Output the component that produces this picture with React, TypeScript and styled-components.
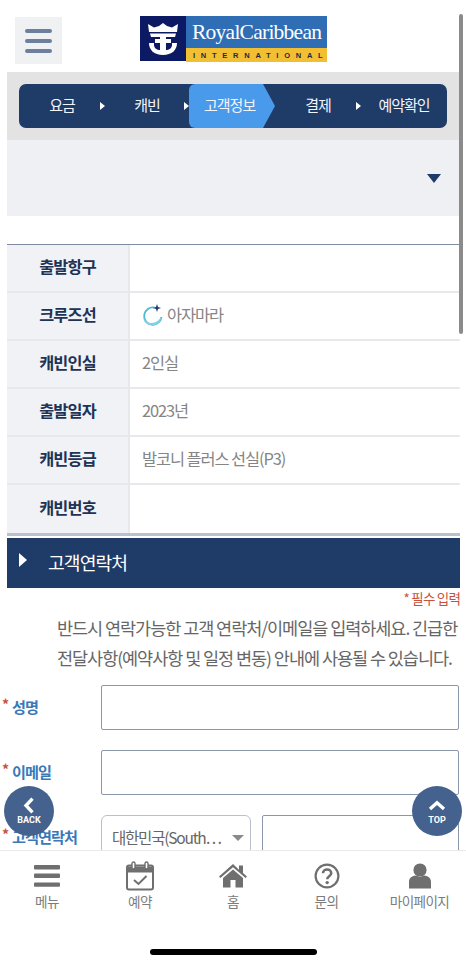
import React from 'react';
import styled, { createGlobalStyle } from 'styled-components';

const KR = `"Noto Sans CJK KR", "Noto Sans", sans-serif`;

const GlobalStyle = createGlobalStyle`
  html, body {
    margin: 0;
    padding: 0;
    background: #fff;
    font-family: ${KR};
  }
  * { box-sizing: border-box; }
`;

const Screen = styled.div`
  position: relative;
  width: 466px;
  height: 964px;
  overflow: hidden;
  background: #fff;
`;

const Content = styled.div`
  display: flex;
  flex-direction: column;
  padding: 0 6px 0 7px;
`;

const Header = styled.header`
  display: flex;
  align-items: flex-start;
  height: 72px;
  padding: 16px 0 0 8px;
`;

const MenuButton = styled.div`
  display: flex;
  flex-direction: column;
  justify-content: center;
  gap: 6px;
  width: 47px;
  height: 47px;
  margin-top: 1px;
  padding: 0 10px;
  background: #f0f1f3;
`;

const MenuLine = styled.span`
  height: 4px;
  border-radius: 2px;
  background: #6d7f9f;
`;

const Logo = styled.div`
  display: flex;
  width: 187px;
  height: 45px;
  margin-left: 78px;
`;

const LogoMark = styled.div`
  display: flex;
  flex: none;
  align-items: center;
  justify-content: center;
  width: 46px;
  background: #0b1a62;
`;

const LogoRight = styled.div`
  display: flex;
  flex: 1;
  min-width: 0;
  flex-direction: column;
`;

const LogoName = styled.div`
  flex: 1;
  padding-left: 6px;
  background: #2f6db5;
  color: #fff;
  font-family: "Liberation Serif", serif;
  font-size: 21.5px;
  line-height: 32px;
  letter-spacing: -0.75px;
  white-space: nowrap;
`;

const LogoSub = styled.div`
  flex: none;
  height: 14px;
  padding-left: 7px;
  background: #f2bf33;
  color: #1b2a4a;
  font-family: "Liberation Sans", sans-serif;
  font-size: 7.5px;
  font-weight: 700;
  line-height: 15px;
  letter-spacing: 5.75px;
  white-space: nowrap;
  overflow: hidden;
`;

const StepWrap = styled.div`
  height: 68px;
  padding: 12px 13px 12px 12px;
  background: #e3e3e3;
`;

const StepBar = styled.nav`
  display: flex;
  align-items: center;
  height: 44px;
  border-radius: 7px;
  background: #1f3b68;
  color: #f2f4f8;
  font-size: 15px;
  letter-spacing: -1px;
`;

const Step = styled.div<{ $width: number }>`
  display: flex;
  align-items: center;
  justify-content: center;
  flex: none;
  width: ${({ $width }) => $width}px;
  height: 44px;
  padding-bottom: 3px;
  white-space: nowrap;
`;

const StepArrow = styled.span`
  flex: none;
  width: 0;
  display: flex;
  justify-content: center;
  transform: translateX(-3px);
  &::before {
    content: '';
    flex: none;
    border-left: 5px solid #fff;
    border-top: 4px solid transparent;
    border-bottom: 4px solid transparent;
  }
`;

const ActiveStep = styled.div`
  display: flex;
  align-items: center;
  flex: none;
  width: 86px;
  height: 44px;
  padding: 0 0 3px 15px;
  background: #4a9aec;
  clip-path: polygon(0 0, 74px 0, 86px 22px, 74px 44px, 0 44px);
  border-radius: 6px 0 0 6px;
  white-space: nowrap;
`;

const SelectPanel = styled.div`
  display: flex;
  align-items: center;
  justify-content: flex-end;
  height: 76px;
  padding: 0 19px 0 0;
  background: #eef0f4;
`;

const Caret = styled.span`
  margin-top: 1px;
  border-top: 9px solid #1f3b68;
  border-left: 7.5px solid transparent;
  border-right: 7.5px solid transparent;
`;

const InfoTable = styled.div`
  margin-top: 28px;
  border-top: 1.5px solid #7d8ba3;
  border-bottom: 3px solid #b9c1cd;
`;

const InfoRow = styled.div`
  display: grid;
  grid-template-columns: 123px 1fr;
  height: 48px;
  border-bottom: 2px solid #e8e9eb;
  &:last-child { border-bottom: 0; height: 47.5px; }
`;

const InfoHead = styled.div`
  display: flex;
  align-items: center;
  justify-content: center;
  padding: 0 0 4px 0;
  background: #f0f2f6;
  border-right: 2px solid #e6e8ec;
  color: #1f3355;
  font-size: 16.3px;
  font-weight: 700;
  letter-spacing: -0.8px;
`;

const InfoValue = styled.div`
  display: flex;
  align-items: center;
  gap: 4px;
  padding: 0 0 4px 12px;
  color: #858585;
  font-size: 16.4px;
  letter-spacing: -1.1px;
  & > svg { margin-top: 3px; }
`;

const SectionTitle = styled.h2`
  display: flex;
  align-items: center;
  height: 50px;
  margin: 2px 0 0;
  padding: 0 0 2px 12px;
  background: #1f3b68;
  color: #fff;
  font-size: 18.2px;
  font-weight: 400;
  letter-spacing: -0.9px;
  &::before {
    content: '';
    margin: -3px 21px 0 0;
    border-left: 8px solid #fff;
    border-top: 7px solid transparent;
    border-bottom: 7px solid transparent;
  }
`;

const Required = styled.div`
  margin-top: 0;
  color: #c8503c;
  font-size: 13.5px;
  line-height: 20px;
  letter-spacing: -0.8px;
  text-align: right;
`;

const Notice = styled.p`
  margin: 5px 0 0;
  padding-left: 50px;
  color: #666;
  font-size: 17.5px;
  line-height: 30px;
  letter-spacing: -1.05px;
  white-space: nowrap;
`;

const FormRow = styled.div<{ $height: number; $gap: number }>`
  display: grid;
  grid-template-columns: 94px 1fr;
  height: ${({ $height }) => $height}px;
  margin: ${({ $gap }) => $gap}px 0 0 -7px;
  width: 459px;
`;

const FormLabel = styled.label`
  display: flex;
  align-items: center;
  padding: 0 0 2px 2px;
  color: #3b78b8;
  font-size: 15.2px;
  font-weight: 700;
  letter-spacing: -1px;
  white-space: nowrap;
  &::before {
    content: '*';
    margin: 0 4px 4px 0;
    color: #c8503c;
    font-size: 14px;
  }
`;

const TextBox = styled.div`
  margin-left: 7px;
  height: 100%;
  border: 1.5px solid #8a97ab;
  border-radius: 2px;
  background: #fff;
`;

const PhoneFields = styled.div`
  display: flex;
  gap: 11px;
  margin-left: 7px;
`;

const CountrySelect = styled.div`
  display: flex;
  align-items: center;
  flex: none;
  width: 150px;
  height: 44px;
  padding: 0 6px 0 10px;
  border: 1.5px solid #b9c0cb;
  border-radius: 6px;
  color: #666;
  font-size: 15.5px;
  letter-spacing: -1.2px;
  white-space: nowrap;
  &::after {
    content: '';
    margin-left: auto;
    margin-top: 3px;
    border-top: 6px solid #8a8a8a;
    border-left: 6px solid transparent;
    border-right: 6px solid transparent;
  }
`;

const PhoneBox = styled.div`
  flex: 1;
  height: 44px;
  border: 1.5px solid #8a97ab;
  border-radius: 2px;
`;

const ScrollThumb = styled.div`
  position: absolute;
  top: 14px;
  left: 459px;
  width: 4px;
  height: 320px;
  border-radius: 2px;
  background: #8b8b8b;
`;

const FloatButton = styled.div<{ $side: 'left' | 'right' }>`
  position: absolute;
  top: 786px;
  ${({ $side }) => ($side === 'left' ? 'left: 4px;' : 'right: 4px;')}
  display: flex;
  flex-direction: column;
  align-items: center;
  width: 50px;
  height: 50px;
  padding-top: 10px;
  border-radius: 50%;
  background: #44628d;
  color: #fff;
  font-family: Roboto, sans-serif;
  font-size: 9px;
  font-weight: 700;
  line-height: 11px;
`;

const ChevronSlot = styled.div`
  display: flex;
  align-items: center;
  justify-content: center;
  height: 18px;
  margin-bottom: 1px;
`;

const BottomNav = styled.nav`
  position: absolute;
  left: 0;
  right: 0;
  bottom: 0;
  height: 114px;
  display: grid;
  grid-template-columns: 94px 92px 94px 93px 93px;
  padding-top: 10px;
  border-top: 1.5px solid #e9e9e9;
  background: #fff;
`;

const NavItem = styled.div`
  display: flex;
  flex-direction: column;
  align-items: center;
  color: #7c7c7c;
  font-size: 13.6px;
  line-height: 18px;
  letter-spacing: -0.6px;
  white-space: nowrap;
`;

const NavIcon = styled.div`
  display: flex;
  align-items: center;
  justify-content: center;
  height: 30px;
  margin-bottom: 1px;
`;

const HomeIndicator = styled.div`
  position: absolute;
  left: 150px;
  bottom: 9px;
  width: 167px;
  height: 6px;
  border-radius: 3px;
  background: #000;
`;

const CrownAnchor = () => (
  <svg width="30" height="32" viewBox="0 0 30 32" fill="#fff">
    <path d="M0 1L6 4.500L11 3L15 0L19 3L24 4.500L30 1L29 9H1Z" />
    <path d="M2 10.500H28L27 14H3Z" />
    <rect x="12" y="14" width="6" height="15" />
    <rect x="7" y="16" width="16" height="4" />
    <path d="M1 20h5v2c0 3 3 5 6 5h6c3 0 6-2 6-5v-2h5c0 7-5 12-14 12S1 27 1 20z" />
  </svg>
);

const ShipIcon = () => (
  <svg width="21" height="23" viewBox="0 0 21 23">
    <path d="M12.500 3.500A8.700 8.700 0 1 0 19.500 13" fill="none" stroke="#4fb8d8" strokeWidth="1.800" />
    <path d="M1.500 13c1 4 5 6.500 9 6 4-.5 7-3 8.500-6.500.5 5-3 9-8.500 9S1 17.500 1.500 13z" fill="#7fd0e0" />
    <path d="M15 0l1 3 3 1-3 1-1 3-1-3-3-1 3-1z" fill="#1f3b68" />
  </svg>
);

const BackIcon = () => (
  <svg width="12" height="17" viewBox="0 0 12 17">
    <path d="M9.500 1.700L3 8.500l6.500 6.800" fill="none" stroke="#fff" strokeWidth="3.400" />
  </svg>
);

const TopIcon = () => (
  <svg width="18" height="11" viewBox="0 0 18 11">
    <path d="M2 9L9 2.800L16 9" fill="none" stroke="#fff" strokeWidth="3.400" />
  </svg>
);

const BarsIcon = () => (
  <svg width="26" height="24" viewBox="0 0 26 24" fill="#6f6f6f">
    <rect y="1" width="26" height="4.400" rx="1" />
    <rect y="9.600" width="26" height="4.400" rx="1" />
    <rect y="18.400" width="26" height="4.400" rx="1" />
  </svg>
);

const CalendarIcon = () => (
  <svg width="28" height="30" viewBox="0 0 28 30">
    <rect x="1" y="4.500" width="26" height="24" rx="2" fill="#fff" stroke="#6f6f6f" strokeWidth="2" />
    <path d="M1 5.500h26v6H1z" fill="#6f6f6f" />
    <rect x="6" y="1" width="3" height="7" rx="1.500" fill="#fff" stroke="#6f6f6f" strokeWidth="1.400" />
    <rect x="19" y="1" width="3" height="7" rx="1.500" fill="#fff" stroke="#6f6f6f" strokeWidth="1.400" />
    <path d="M8 19l4.500 4 8-8" fill="none" stroke="#6f6f6f" strokeWidth="2" />
  </svg>
);

const HouseIcon = () => (
  <svg width="28" height="24" viewBox="0 0 28 24" fill="#6f6f6f">
    <path d="M14 0L0 12.500l1.400 1.600L14 3.200l12.600 10.900 1.400-1.600-4-3.500V1.500h-4v4.200z" />
    <path d="M14 5.400L4 14v9.500h7.500V16h5v7.500H24V14z" />
  </svg>
);

const QuestionIcon = () => (
  <svg width="26" height="26" viewBox="0 0 26 26">
    <circle cx="13" cy="13" r="11.400" fill="none" stroke="#6f6f6f" strokeWidth="2.200" />
    <path d="M9 10.200c0-5 8.200-5 8.200 0 0 3-4 3-4 6" fill="none" stroke="#6f6f6f" strokeWidth="2.600" />
    <circle cx="13.200" cy="19.600" r="1.700" fill="#6f6f6f" />
  </svg>
);

const PersonIcon = () => (
  <svg width="22" height="26" viewBox="0 0 22 26" fill="#6f6f6f">
    <circle cx="11" cy="7" r="6.600" />
    <path d="M0 25.500V19c0-4 3-6 7-6.400 2.400 1.400 5.600 1.400 8 0 4 .4 7 2.400 7 6.400v6.500z" />
  </svg>
);

const rows: { label: string; value?: string; ship?: boolean }[] = [
  { label: '출발항구' },
  { label: '크루즈선', value: '아자마라', ship: true },
  { label: '캐빈인실', value: '2인실' },
  { label: '출발일자', value: '2023년' },
  { label: '캐빈등급', value: '발코니 플러스 선실(P3)' },
  { label: '캐빈번호' },
];

const navItems = [
  { label: '메뉴', icon: <BarsIcon /> },
  { label: '예약', icon: <CalendarIcon /> },
  { label: '홈', icon: <HouseIcon /> },
  { label: '문의', icon: <QuestionIcon /> },
  { label: '마이페이지', icon: <PersonIcon /> },
];

export default function App() {
  return (
    <Screen>
      <GlobalStyle />
      <Content>
        <Header>
          <MenuButton>
            <MenuLine />
            <MenuLine />
            <MenuLine />
          </MenuButton>
          <Logo>
            <LogoMark>
              <CrownAnchor />
            </LogoMark>
            <LogoRight>
              <LogoName>RoyalCaribbean</LogoName>
              <LogoSub>INTERNATIONAL</LogoSub>
            </LogoRight>
          </Logo>
        </Header>

        <StepWrap>
          <StepBar>
            <Step $width={86}>요금</Step>
            <StepArrow />
            <Step $width={84}>캐빈</Step>
            <StepArrow />
            <ActiveStep>고객정보</ActiveStep>
            <Step $width={86}>결제</Step>
            <StepArrow />
            <Step $width={86}>예약확인</Step>
          </StepBar>
        </StepWrap>

        <SelectPanel>
          <Caret />
        </SelectPanel>

        <InfoTable>
          {rows.map((row) => (
            <InfoRow key={row.label}>
              <InfoHead>{row.label}</InfoHead>
              <InfoValue>
                {row.ship && <ShipIcon />}
                {row.value}
              </InfoValue>
            </InfoRow>
          ))}
        </InfoTable>

        <SectionTitle>고객연락처</SectionTitle>
        <Required>* 필수 입력</Required>
        <Notice>
          반드시 연락가능한 고객 연락처/이메일을 입력하세요. 긴급한
          <br />
          전달사항(예약사항 및 일정 변동) 안내에 사용될 수 있습니다.
        </Notice>

        <FormRow $height={45} $gap={12}>
          <FormLabel>성명</FormLabel>
          <TextBox />
        </FormRow>
        <FormRow $height={45} $gap={20}>
          <FormLabel>이메일</FormLabel>
          <TextBox />
        </FormRow>
        <FormRow $height={44} $gap={20}>
          <FormLabel>고객연락처</FormLabel>
          <PhoneFields>
            <CountrySelect>대한민국(South⋯</CountrySelect>
            <PhoneBox />
          </PhoneFields>
        </FormRow>
      </Content>

      <ScrollThumb />

      <BottomNav>
        {navItems.map((item) => (
          <NavItem key={item.label}>
            <NavIcon>{item.icon}</NavIcon>
            {item.label}
          </NavItem>
        ))}
      </BottomNav>

      <FloatButton $side="left">
        <ChevronSlot>
          <BackIcon />
        </ChevronSlot>
        BACK
      </FloatButton>
      <FloatButton $side="right">
        <ChevronSlot>
          <TopIcon />
        </ChevronSlot>
        TOP
      </FloatButton>

      <HomeIndicator />
    </Screen>
  );
}
